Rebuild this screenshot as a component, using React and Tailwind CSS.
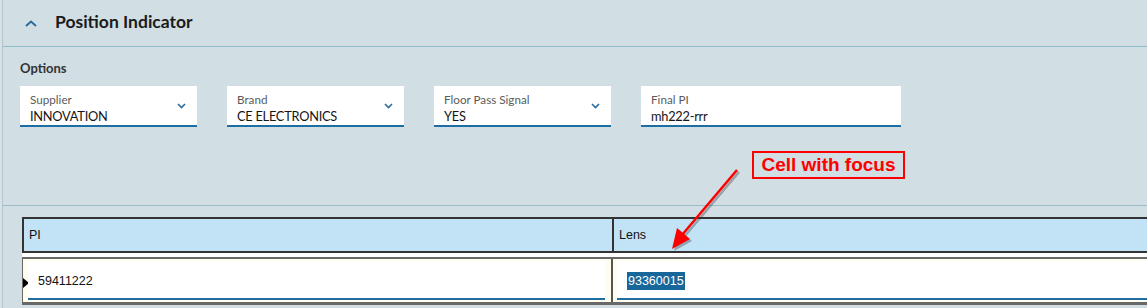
import React from 'react'

const ChevronUp = () => (
  <svg width="12" height="7" viewBox="0 0 12 7" fill="none">
    <path d="M1 6L6 1.5L11 6" stroke="#2a6c9e" strokeWidth="2" />
  </svg>
)

const ChevronDown = () => (
  <svg width="9" height="6" viewBox="0 0 9 6" fill="none">
    <path d="M1 1L4.5 4.5L8 1" stroke="#2a6c9e" strokeWidth="1.6" />
  </svg>
)

function Field({ label, value, width, select = true }) {
  return (
    <div className={`${width} h-[41px] bg-white border-b-2 border-[#1e6ea3] flex items-start pl-[10px] pr-[11px] pt-[6px]`}>
      <div className="flex-1">
        <div className="text-[11.7px] leading-[14px] text-[#5b5b5b]">{label}</div>
        <div className="text-[12.8px] leading-[16px] tracking-[-0.25px] text-[#151515] mt-[2px]">{value}</div>
      </div>
      {select && (
        <div className="mt-[11px]">
          <ChevronDown />
        </div>
      )}
    </div>
  )
}

export default function App() {
  return (
    <div className="relative w-[1147px] h-[308px] overflow-hidden bg-[#d1dee3] flex font-['Lato',sans-serif]">
      <div className="w-[2px] shrink-0 bg-[#d6e2e6]" />
      <div className="flex-1 min-w-0 border-l border-[#b3c4cb] flex flex-col">
        {/* Section header */}
        <div className="h-[47px] shrink-0 border-b border-[#8dbdcc] flex items-center pl-[22px]">
          <ChevronUp />
          <span className="ml-[18px] text-[17.5px] font-bold text-[#1b1b1b] mb-[2px]">Position Indicator</span>
        </div>

        {/* Options */}
        <div className="h-[159px] shrink-0 border-b border-[#9cbcc8] pl-[17px] pt-[13px]">
          <div className="text-[13px] leading-[17px] font-bold text-[#333]">Options</div>
          <div className="flex gap-[30px] mt-[9px]">
            <Field label="Supplier" value="INNOVATION" width="w-[177px]" />
            <Field label="Brand" value="CE ELECTRONICS" width="w-[177px]" />
            <Field label="Floor Pass Signal" value="YES" width="w-[177px]" />
            <Field label="Final PI" value="mh222-rrr" width="w-[260px]" select={false} />
          </div>
        </div>

        {/* Grid */}
        <div className="pt-[11px] pl-[19px] font-['Liberation_Sans',sans-serif] text-[12.5px] text-[#111]">
          <div className="w-[1140px] bg-white">
            <div className="h-[36px] flex bg-[#c1e3f5] border-t-2 border-b-2 border-l-2 border-[#333]">
              <div className="w-[590px] border-r-2 border-[#333] flex items-center pl-[5px]">PI</div>
              <div className="flex-1 flex items-center pl-[5px]">Lens</div>
            </div>
            <div className="h-[4px]" />
            <div className="h-[48px] flex bg-[#fffdf0] border-t-2 border-b-[3px] border-l border-[#686868]">
              <div className="w-[5px] flex items-center">
                <div className="w-0 h-0 border-y-[5px] border-y-transparent border-l-[6px] border-l-black mt-[4px]" />
              </div>
              <div className="w-[577px] my-[2px] bg-white border-b-2 border-[#1e6ea3] flex items-center pl-[10px] pt-[3px]">
                59411222
              </div>
              <div className="w-[6px]" />
              <div className="w-[2px] bg-[#555]" />
              <div className="w-[4px]" />
              <div className="flex-1 my-[2px] bg-white border-b-2 border-[#1e6ea3] flex items-center pl-[10px] pt-[3px]">
                <span className="bg-[#17679a] text-white leading-[18px] px-[1px]">93360015</span>
              </div>
            </div>
          </div>
        </div>
      </div>

      {/* Annotation */}
      <div className="absolute left-[752px] top-[151px] w-[153px] h-[28px] border-2 border-[#ff0000] flex items-center justify-center font-['Liberation_Sans',sans-serif] font-bold text-[19px] text-[#ff0000]">
        Cell with focus
      </div>
      <svg className="absolute left-[660px] top-[165px]" width="90" height="95" viewBox="0 0 90 95">
        <g transform="translate(2,2)" opacity="0.35">
          <line x1="77" y1="5" x2="22" y2="70" stroke="#333" strokeWidth="2.5" />
          <path d="M12 84L17 63L30 74Z" fill="#333" />
        </g>
        <line x1="77" y1="5" x2="22" y2="70" stroke="#ff0000" strokeWidth="2.5" />
        <path d="M12 84L17 63L30 74Z" fill="#ff0000" />
      </svg>
    </div>
  )
}
